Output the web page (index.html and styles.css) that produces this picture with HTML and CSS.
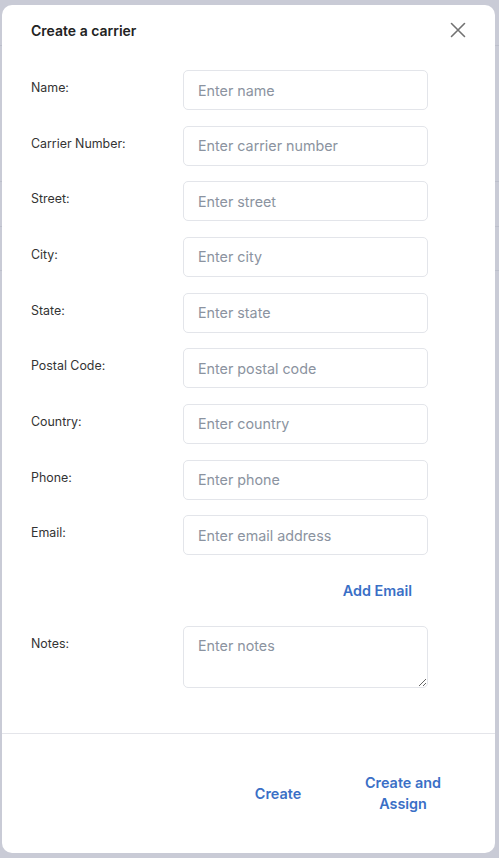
FILE: index.html
```html
<!DOCTYPE html>
<html lang="en">
<head>
<meta charset="utf-8">
<title>Create a carrier</title>
<link rel="stylesheet" href="styles.css">
</head>
<body>
<div class="backdrop">
  <div class="bg-row r1"></div>
  <div class="bg-row r2"></div>
  <div class="bg-row r3"></div>
  <div class="bg-row r4"></div>
</div>
<div class="modal">
  <div class="modal-header">
    <h2 class="title">Create a carrier</h2>
    <button class="close" aria-label="Close">
      <svg width="16" height="16" viewBox="0 0 16 16"><path d="M1.5 1.5 L14.5 14.5 M14.5 1.5 L1.5 14.5" stroke="#727272" stroke-width="1.6" fill="none" stroke-linecap="round"/></svg>
    </button>
  </div>
  <div class="modal-body">
    <div class="row"><label class="label">Name:</label><input class="field" placeholder="Enter name"></div>
    <div class="row"><label class="label">Carrier Number:</label><input class="field" placeholder="Enter carrier number"></div>
    <div class="row"><label class="label">Street:</label><input class="field" placeholder="Enter street"></div>
    <div class="row"><label class="label">City:</label><input class="field" placeholder="Enter city"></div>
    <div class="row"><label class="label">State:</label><input class="field" placeholder="Enter state"></div>
    <div class="row"><label class="label">Postal Code:</label><input class="field" placeholder="Enter postal code"></div>
    <div class="row"><label class="label">Country:</label><input class="field" placeholder="Enter country"></div>
    <div class="row"><label class="label">Phone:</label><input class="field" placeholder="Enter phone"></div>
    <div class="row"><label class="label">Email:</label><input class="field" placeholder="Enter email address"></div>
    <div class="row add-row"><span></span><div class="add-wrap"><button class="link-btn">Add Email</button></div></div>
    <div class="row"><label class="label">Notes:</label><textarea class="field notes" placeholder="Enter notes"></textarea></div>
  </div>
  <div class="modal-footer">
    <button class="link-btn foot-btn">Create</button>
    <button class="link-btn foot-btn">Create and Assign</button>
  </div>
</div>
</body>
</html>
```
FILE: styles.css
```css
* { box-sizing: border-box; }
html, body { margin: 0; padding: 0; }
body {
  width: 499px;
  height: 858px;
  background: #c9cbd6;
  font-family: Inter, "Noto Sans", "Liberation Sans", sans-serif;
  overflow: hidden;
  position: relative;
}
.backdrop { padding-top: 45px; }
.bg-row { border-top: 1px solid #bcbfcb; }
.r1 { height: 136px; }
.r2 { height: 45px; }
.r3 { height: 44px; }
.r4 { height: 44px; }
.modal {
  position: absolute;
  left: 2px;
  top: 5px;
  width: 493px;
  height: 848px;
  background: #fff;
  border-radius: 10px;
  display: flex;
  flex-direction: column;
}
.modal-header {
  display: flex;
  align-items: center;
  justify-content: space-between;
  padding: 16px 29px 0 29px;
  height: 36px;
}
.title {
  margin: 0;
  font-size: 14px;
  line-height: 20px;
  font-weight: 600;
  color: #222;
}
.close {
  border: 0;
  background: none;
  padding: 0;
  width: 16px;
  height: 16px;
  display: flex;
  margin-top: -2px;
  cursor: pointer;
}
.modal-body {
  padding: 29px 0 45px 29px;
  display: flex;
  flex-direction: column;
  gap: 15.67px;
  border-bottom: 1px solid #e4e5ea;
}
.row {
  display: grid;
  grid-template-columns: 152px 245px;
  align-items: start;
}
.label {
  font-size: 12.4px;
  line-height: 18px;
  padding-top: 9px;
  color: #333;
}
.field {
  height: 40px;
  width: 245px;
  border: 1px solid #e3e5ea;
  border-radius: 5px;
  padding: 0 14px;
  font-family: inherit;
  font-size: 14.3px;
  color: #333;
  background: #fff;
  outline: none;
}
.field::placeholder { color: #8b93a0; }
.notes {
  height: 62px;
  padding-top: 9px;
  line-height: 20px;
  resize: vertical;
  display: block;
}
.add-row { margin-bottom: -1px; }
.add-wrap { display: flex; justify-content: flex-end; }
.link-btn {
  border: 0;
  background: none;
  font-family: inherit;
  font-size: 14.4px;
  font-weight: 600;
  color: #3a6fc6;
  padding: 0 16px;
  height: 40px;
  cursor: pointer;
}
.modal-footer {
  flex: 1;
  display: flex;
  align-items: center;
  justify-content: flex-end;
  gap: 15px;
  padding: 0 37px 0 0;
}
.foot-btn {
  width: 110px;
  height: auto;
  line-height: 21px;
  text-align: center;
}
```
